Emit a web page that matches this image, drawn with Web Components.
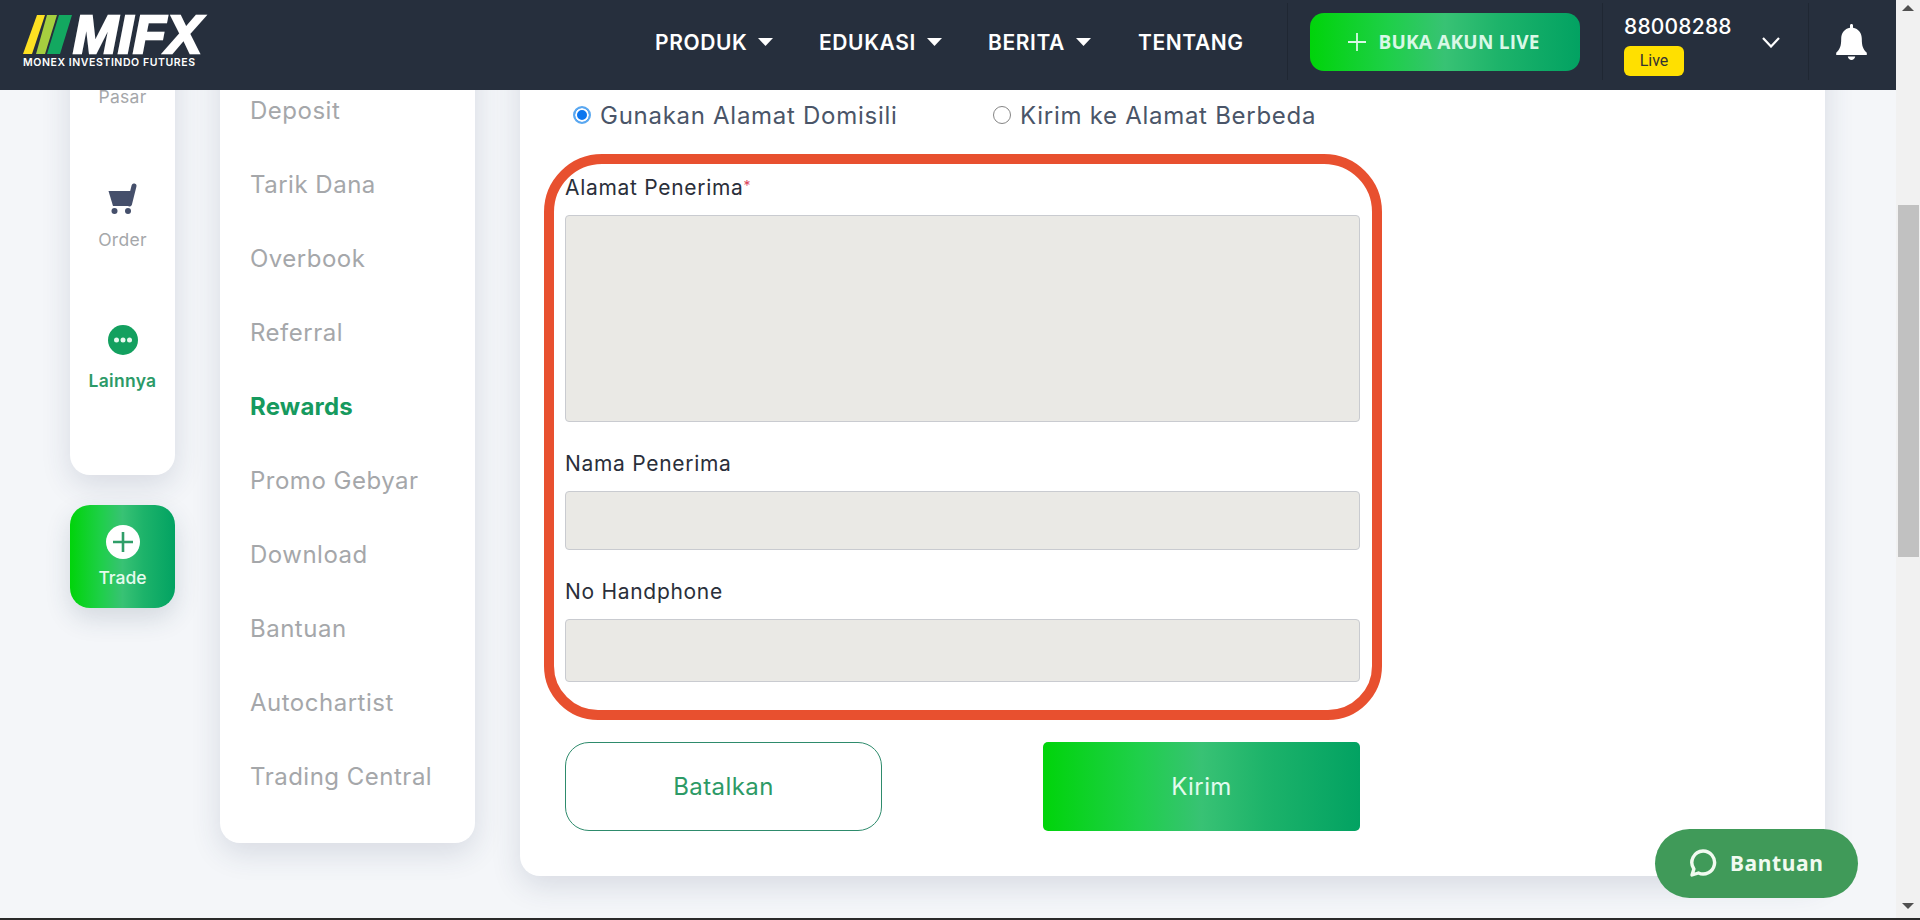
<!DOCTYPE html>
<html lang="id"><head><meta charset="utf-8"><title>MIFX</title>
<style>
html,body{margin:0;height:100%;overflow:hidden}
body{font-family:Inter,"Liberation Sans",sans-serif;background:#f4f6f9;display:flex;flex-direction:column;height:920px}
#top{display:flex;flex:1;min-height:0}
#strip{height:2px;background:#2a2a2a}
#view{flex:1;position:relative;display:flex;flex-direction:column;min-width:0;overflow:hidden}
#row{display:flex;align-items:flex-start;gap:45px;padding-left:70px;margin-top:-70px}
#col1{display:flex;flex-direction:column;gap:30px;flex:none}
</style></head><body>
<div id="top">
 <div id="view">
  <mf-header></mf-header>
  <div id="row">
   <div id="col1">
    <mf-rail>
      <mf-rail-item label="Pasar"></mf-rail-item>
      <mf-rail-item label="Order"><svg width="29" height="31" viewBox="0 0 29 31"><path d="M.5 8H25l-3.5 15H5z" fill="#454f6b"/><path d="M21.500 21L26 3" stroke="#454f6b" stroke-width="5" stroke-linecap="round" fill="none"/><circle cx="6.500" cy="28" r="3" fill="#454f6b"/><circle cx="20" cy="28" r="3" fill="#454f6b"/></svg></mf-rail-item>
      <mf-rail-item label="Lainnya" active><svg width="30" height="30" viewBox="0 0 30 30"><circle cx="15" cy="15" r="15" fill="#13a05f"/><circle cx="8.500" cy="15" r="2.500" fill="#e6f8ee"/><circle cx="15" cy="15" r="2.500" fill="#e6f8ee"/><circle cx="21.500" cy="15" r="2.500" fill="#e6f8ee"/></svg></mf-rail-item>
    </mf-rail>
    <mf-trade></mf-trade>
   </div>
   <mf-menu>
     <mf-menu-item>Deposit</mf-menu-item>
     <mf-menu-item>Tarik Dana</mf-menu-item>
     <mf-menu-item>Overbook</mf-menu-item>
     <mf-menu-item>Referral</mf-menu-item>
     <mf-menu-item active>Rewards</mf-menu-item>
     <mf-menu-item>Promo Gebyar</mf-menu-item>
     <mf-menu-item>Download</mf-menu-item>
     <mf-menu-item>Bantuan</mf-menu-item>
     <mf-menu-item>Autochartist</mf-menu-item>
     <mf-menu-item>Trading Central</mf-menu-item>
   </mf-menu>
   <mf-form-card></mf-form-card>
  </div>
  <mf-help></mf-help>
 </div>
 <mf-scrollbar></mf-scrollbar>
</div>
<div id="strip"></div>
<script>
const GRAD='linear-gradient(90deg,#00d40a 0%,#1fcf4a 30%,#38c274 50%,#1db36a 70%,#02a262 100%)';
const SH='0 10px 30px rgba(40,60,90,.14)';
function def(name,css,html,init){
  customElements.define(name,class extends HTMLElement{
    constructor(){super();const r=this.attachShadow({mode:'open'});
      r.innerHTML='<style>'+css+'</style>'+(typeof html==='function'?html(this):html);}
    connectedCallback(){if(init)init(this)}
  });
}
def('mf-header',`
:host{display:flex;align-items:center;height:90px;box-sizing:border-box;padding-bottom:6px;background:#262f3d;position:relative;z-index:5;flex:none;color:#fff}
.logo{width:184px;margin-left:22px;flex:none;display:flex;flex-direction:column}
.mark{display:flex;align-items:center;height:39px}
.mifx{font:italic 700 54px/39px "Liberation Sans",sans-serif;color:#fff;-webkit-text-stroke:2.400px #fff;height:39px;margin-left:1px;white-space:nowrap}
.sub{font:600 10.500px/12px Inter,sans-serif;letter-spacing:.58px;margin-top:3px;white-space:nowrap;margin-left:1px}
nav{display:grid;grid-template-columns:164px 169px 150px 105px;margin-left:449px;flex:none}
.sep{width:1px;height:77px;background:#1f2733;align-self:flex-start;margin-top:3px;flex:none}
.s1{margin-left:44px}
.cta{margin-left:22px;width:270px;height:58px;border-radius:14px;background:${GRAD};display:flex;align-items:center;justify-content:center;gap:12px;flex:none;box-sizing:border-box;padding-right:2px}
.cta span{font:700 19px/1 "Open Sans",sans-serif;color:#d9f8e6;white-space:nowrap;letter-spacing:.2px}
.s2{margin-left:22px}
.acct{margin-left:21px;margin-top:6px;width:138px;flex:none;display:flex;flex-direction:column;align-items:flex-start;gap:6px}
.num{font:500 21px/26px Inter,sans-serif;letter-spacing:.2px;margin-top:-1px}
.live{width:60px;height:30px;background:#ffe000;border-radius:6px;color:#333;font:400 16px/30px Roboto,sans-serif;text-align:center}
.chev{flex:none}
.s3{margin-left:28px}
.bell{margin-left:27px;flex:none}
`,`<div class="logo"><div class="mark"><svg width="50" height="39" viewBox="0 0 50 39" style="flex:none"><polygon points="15,0 23,0 10,39 1,39" fill="#fde022"/><polygon points="25,0 35,0 23,39 14,39" fill="#a6cf3f"/><polygon points="37,0 50,0 38,39 25,39" fill="#13a860"/></svg><div class="mifx">MIFX</div></div><div class="sub">MONEX INVESTINDO FUTURES</div></div>
<nav><mf-nav caret>PRODUK</mf-nav><mf-nav caret>EDUKASI</mf-nav><mf-nav caret>BERITA</mf-nav><mf-nav>TENTANG</mf-nav></nav>
<div class="sep s1"></div>
<div class="cta"><svg width="18" height="18" viewBox="0 0 18 18" style="flex:none"><path d="M9 0v18M0 9h18" stroke="#d9f8e6" stroke-width="1.800"/></svg><span>BUKA AKUN LIVE</span></div>
<div class="sep s2"></div>
<div class="acct"><div class="num">88008288</div><div class="live">Live</div></div>
<svg class="chev" width="18" height="11" viewBox="0 0 18 11"><path d="M1 1l8 8.500L17 1" stroke="#fff" stroke-width="2.200" fill="none"/></svg>
<div class="sep s3"></div>
<svg class="bell" width="31" height="36" viewBox="0 0 31 36"><path d="M15.500 0c1 0 1.500.7 1.500 1.600v2.200c5.500 1 8.800 5.300 8.800 11 0 8 1.400 10.300 5 14V31H.2v-2.200c3.600-3.700 5-6 5-14 0-5.700 3.300-10 8.800-11V1.600c0-.9.500-1.600 1.500-1.600z" fill="#fff"/><path d="M11.800 32.500h7.400c-.4 2.200-1.900 3.500-3.700 3.500s-3.300-1.300-3.700-3.500z" fill="#fff"/></svg>`);
def('mf-nav',`:host{display:flex;align-items:center;gap:11px;font:600 21px/1 Inter,sans-serif;color:#fff;letter-spacing:.6px}
svg{flex:none}`,h=>`<slot></slot>${h.hasAttribute('caret')?'<svg width="15" height="8" viewBox="0 0 15 8"><path d="M0 0h15L7.500 8z" fill="#fff"/></svg>':''}`);
def('mf-rail',`:host{display:block;width:105px;height:455px;box-sizing:border-box;padding-top:20px;background:#fff;border-radius:20px;box-shadow:${SH}}`,`<slot></slot>`);
def('mf-rail-item',`:host{display:flex;flex-direction:column;align-items:center;height:142px;font:400 17.500px/22px Inter,sans-serif;color:#a5a7aa;letter-spacing:.3px}
:host([active]){color:#2b9a68;font-weight:600}
.i{height:32px;margin-bottom:14px;display:flex;align-items:center}
:host([label="Order"]) .i{margin-bottom:15px}`,h=>`<div class="i"><slot></slot></div><div>${h.getAttribute('label')}</div>`);
def('mf-trade',`:host{display:flex;flex-direction:column;align-items:center;width:105px;height:103px;border-radius:20px;background:${GRAD};box-shadow:0 10px 26px rgba(40,60,90,.16);color:#e6fbee;font:500 17.500px/22px Inter,sans-serif;box-sizing:border-box;padding-top:20px}
svg{margin-bottom:8px}`,`<svg width="34" height="34" viewBox="0 0 34 34"><circle cx="17" cy="17" r="17" fill="#fff"/><path d="M17 7v20M7 17h20" stroke="#2f9e68" stroke-width="2.600"/></svg><div>Trade</div>`);
def('mf-menu',`:host{display:block;width:255px;box-sizing:border-box;padding:54px 0 29px;background:#fff;border-radius:20px;box-shadow:${SH};flex:none}`,`<slot></slot>`);
def('mf-menu-item',`:host{display:flex;align-items:center;height:74px;padding-left:30px;font:400 24px/1 Inter,sans-serif;color:#a5a7aa;letter-spacing:.5px;white-space:nowrap}
:host([active]){color:#169a5e;font-weight:700;letter-spacing:.2px}`,`<slot></slot>`);
def('mf-form-card',`:host{display:block;position:relative;width:1305px;box-sizing:border-box;padding:82px 0 45px 45px;background:#fff;border-radius:20px;box-shadow:${SH};flex:none}
.wrap{width:795px;display:flex;flex-direction:column}
.radios{display:flex;height:28px;margin-bottom:45px}
.btns{display:flex;justify-content:space-between;margin-top:60px}
.ring{position:absolute;left:24px;top:134px;width:838px;height:566px;box-sizing:border-box;border:10px solid #e8502f;border-radius:58px 58px 54px 54px;pointer-events:none}
`,`<div class="wrap"><div class="radios"><mf-radio checked style="width:420px">Gunakan Alamat Domisili</mf-radio><mf-radio>Kirim ke Alamat Berbeda</mf-radio></div>
<mf-field required h="207">Alamat Penerima</mf-field>
<mf-field h="59" style="margin-top:29px">Nama Penerima</mf-field>
<mf-field h="63" style="margin-top:29px">No Handphone</mf-field>
<div class="btns"><mf-btn>Batalkan</mf-btn><mf-btn primary>Kirim</mf-btn></div></div><div class="ring"></div>`);
def('mf-radio',`:host{display:flex;align-items:center;gap:9px;font:400 24px/28px Inter,sans-serif;color:#4a5568;white-space:nowrap;padding-left:8px;box-sizing:border-box;letter-spacing:.72px}
.r{width:18px;height:18px;border-radius:50%;box-sizing:border-box;flex:none;border:1.500px solid #858585;background:#fff;margin-top:-2px}
:host([checked]) .r{border:2px solid #5aa8f0;background:#0b76ef;box-shadow:inset 0 0 0 2px #fff}`,`<div class="r"></div><slot></slot>`);
def('mf-field',`:host{display:block}
.l{font:400 21px/24px Inter,sans-serif;color:#2a2f3a;padding-top:1px;margin-bottom:15px;letter-spacing:.7px;white-space:nowrap}
.req{color:#d9435a;font-size:14px;line-height:0;vertical-align:4px;letter-spacing:0}
.b{background:#eae9e5;border:1px solid #c9cbd0;border-radius:4px;box-sizing:border-box}`,h=>`<div class="l"><slot></slot>${h.hasAttribute('required')?'<span class="req">*</span>':''}</div><div class="b" style="height:${h.getAttribute('h')}px"></div>`);
def('mf-btn',`:host{display:flex;align-items:center;justify-content:center;width:317px;height:89px;box-sizing:border-box;border:1px solid #2e8b6c;border-radius:24px;color:#2d9a66;font:400 24px/1 Inter,sans-serif;letter-spacing:.4px}
:host([primary]){border:0;border-radius:5px;background:${GRAD};color:#e2fbee}`,`<slot></slot>`);
def('mf-help',`:host{position:absolute;right:38px;bottom:20px;width:203px;height:69px;border-radius:35px;background:#409a59;display:flex;align-items:center;gap:13px;padding-left:32px;box-sizing:border-box;color:#f1faf0;font:700 21px/1 "Noto Sans",sans-serif;letter-spacing:.6px;z-index:6}`,`<svg width="30" height="32" viewBox="0 0 30 32" style="flex:none"><path d="M16 3a11.500 11.500 0 1 1-4.600 22l-6.400 2 1.900-6A11.500 11.500 0 0 1 16 3z" fill="none" stroke="#f1faf0" stroke-width="3.400" stroke-linejoin="round"/></svg><span>Bantuan</span>`);
def('mf-scrollbar',`:host{display:flex;flex-direction:column;align-items:center;width:24px;background:#f1f1f1;flex:none}
.u,.d{width:0;height:0;border-left:6px solid transparent;border-right:6px solid transparent;flex:none}
.u{border-bottom:6px solid #505050;margin-top:5px}
.d{border-top:6px solid #505050;margin-bottom:9px}
.t{width:21px;height:352px;background:#c1c1c1;margin-top:194px}
.g{flex:1}`,`<div class="u"></div><div class="t"></div><div class="g"></div><div class="d"></div>`);
</script>
</body></html>
